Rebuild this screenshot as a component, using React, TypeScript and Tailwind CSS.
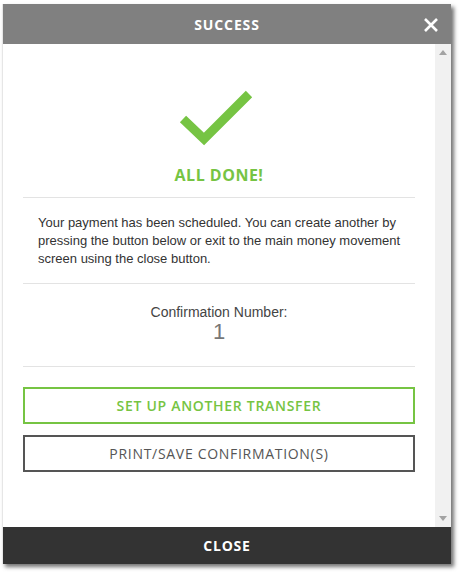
import React from "react";

const HEAD = { fontFamily: '"Open Sans", "DejaVu Sans", sans-serif' };
const BODY = { fontFamily: '"Liberation Sans", Arial, sans-serif' };

export default function App() {
  return (
    <div className="w-[459px] h-[572px] bg-white pt-[4px] pl-[2px]">
      <div className="w-[449px] h-[560px] flex flex-col bg-white shadow-[3px_3px_4px_rgba(0,0,0,0.55)] border-l border-[#e6e6e6]">
        <div className="h-[40px] bg-[#808080] flex items-center justify-center relative shrink-0">
          <span style={HEAD} className="text-white font-bold text-[14px] tracking-[0.9px]">SUCCESS</span>
          <svg className="absolute right-[12px] top-[13px]" width="16" height="16" viewBox="0 0 16 16">
            <path d="M2 2 L14 14 M14 2 L2 14" stroke="#ffffff" strokeWidth="2.6" strokeLinecap="butt" />
          </svg>
        </div>
        <div className="flex-1 flex flex-row min-h-0">
          <div className="flex-1 px-[20px] flex flex-col">
            <div className="flex justify-center pt-[42px]">
              <svg width="90" height="60" viewBox="0 0 90 60">
                <polyline points="9,33 30,53 75,8" fill="none" stroke="#76c443" strokeWidth="9" strokeLinecap="butt" strokeLinejoin="miter" />
              </svg>
            </div>
            <div style={HEAD} className="text-center text-[#76c443] font-bold text-[16px] leading-[20px] tracking-[0.5px] mt-[19px]">ALL DONE!</div>
            <div className="border-t border-[#e3e3e3] mt-[12px]" />
            <p style={BODY} className="pl-[15px] pr-[6px] pt-[16px] text-[13px] leading-[18px] text-[#333]">
              Your payment has been scheduled. You can create another by pressing the button below or exit to the main money movement screen using the close button.
            </p>
            <div className="border-t border-[#e3e3e3] mt-[15px]" />
            <div style={BODY} className="text-center text-[14px] leading-[16px] text-[#444] mt-[20px]">Confirmation Number:</div>
            <div style={BODY} className="text-center text-[22px] leading-[24px] text-[#777] mt-[0px]">1</div>
            <div className="border-t border-[#e3e3e3] mt-[22px]" />
            <button style={HEAD} className="mt-[20px] h-[37px] border-2 border-[#76c443] text-[#76c443] text-[14px] font-semibold tracking-[0.7px] flex items-center justify-center">
              SET UP ANOTHER TRANSFER
            </button>
            <button style={HEAD} className="mt-[11px] h-[37px] border-2 border-[#555] text-[#555] text-[14px] tracking-[0.7px] flex items-center justify-center">
              PRINT/SAVE CONFIRMATION(S)
            </button>
          </div>
          <div className="w-[16px] bg-[#f1f1f1] flex flex-col items-center justify-between py-[6px]">
            <svg width="8" height="5" viewBox="0 0 8 5"><path d="M0 5 L4 0 L8 5 Z" fill="#a3a3a3" /></svg>
            <svg width="8" height="5" viewBox="0 0 8 5"><path d="M0 0 L4 5 L8 0 Z" fill="#a3a3a3" /></svg>
          </div>
        </div>
        <div className="h-[37px] bg-[#333333] flex items-center justify-center shrink-0">
          <span style={HEAD} className="text-white font-bold text-[14px] tracking-[0.8px]">CLOSE</span>
        </div>
      </div>
    </div>
  );
}
